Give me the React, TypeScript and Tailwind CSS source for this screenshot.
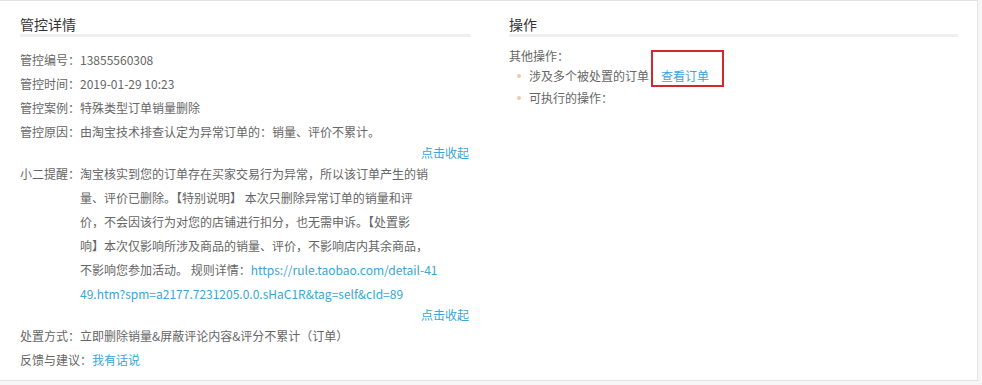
import React from 'react';

const font = { fontFamily: '"Noto Sans CJK SC", "Noto Sans", sans-serif' };

const Row = ({ label, children }: { label: string; children: React.ReactNode }) => (
  <div className="flex leading-[24px] whitespace-nowrap">
    <span>{label}</span>
    <span>{children}</span>
  </div>
);

const Collapse = () => (
  <div className="text-right leading-[18px] pr-[2px]">
    <a className="text-[#39a5d8] cursor-pointer">点击收起</a>
  </div>
);

const tipLines = [
  '淘宝核实到您的订单存在买家交易行为异常，所以该订单产生的销',
  '量、评价已删除。【特别说明】 本次只删除异常订单的销量和评',
  '价，不会因该行为对您的店铺进行扣分，也无需申诉。【处置影',
  '响】本次仅影响所涉及商品的销量、评价，不影响店内其余商品，',
];

export default function App() {
  return (
    <div className="w-[982px] h-[385px] bg-[#f6f6f7]" style={font}>
      <div className="w-[978px] h-[381px] bg-white border-t border-r border-b border-[#e3e3e6] flex gap-[38px] pl-[20px] pr-[19px] text-[12px] text-[#666]">
        {/* 管控详情 */}
        <div className="w-[452px]">
          <div className="pt-[13px] leading-[20px] text-[14px] text-[#333] border-b-[3px] border-[#efefef]">管控详情</div>
          <div className="mt-[11px]">
            <Row label="管控编号：">13855560308</Row>
            <Row label="管控时间：">2019-01-29 10:23</Row>
            <Row label="管控案例：">特殊类型订单销量删除</Row>
            <Row label="管控原因：">由淘宝技术排查认定为异常订单的：销量、评价不累计。</Row>
            <Collapse />
            <div className="flex leading-[24px] whitespace-nowrap">
              <span className="w-[60px] shrink-0">小二提醒：</span>
              <div>
                {tipLines.map((l) => (
                  <div key={l}>{l}</div>
                ))}
                <div>
                  不影响您参加活动。 规则详情：
                  <a className="text-[#39a5d8]">https://rule.taobao.com/detail-41</a>
                </div>
                <div>
                  <a className="text-[#39a5d8]">49.htm?spm=a2177.7231205.0.0.sHaC1R&amp;tag=self&amp;cId=89</a>
                </div>
              </div>
            </div>
            <Collapse />
            <Row label="处置方式：">立即删除销量&amp;屏蔽评论内容&amp;评分不累计（订单）</Row>
            <Row label="反馈与建议：">
              <a className="text-[#39a5d8]">我有话说</a>
            </Row>
          </div>
        </div>

        {/* 操作 */}
        <div className="w-[450px]">
          <div className="pt-[13px] leading-[20px] text-[14px] text-[#333] border-b-[3px] border-[#efefef]">操作</div>
          <div className="mt-[10px] leading-[18px]">其他操作：</div>
          <ul className="leading-[22px]">
            <li className="flex items-center pl-[8px]">
              <span className="w-[4px] h-[4px] rounded-full bg-[#f0c9a6] mr-[8px]" />
              <span>涉及多个被处置的订单：</span>
              <span className="relative">
                <a className="text-[#39a5d8]">查看订单</a>
                <span className="absolute left-[-10px] top-[-15px] w-[73px] h-[37px] border-2 border-[#d3262d]" />
              </span>
            </li>
            <li className="flex items-center pl-[8px]">
              <span className="w-[4px] h-[4px] rounded-full bg-[#f0c9a6] mr-[8px]" />
              <span>可执行的操作：</span>
            </li>
          </ul>
        </div>
      </div>
    </div>
  );
}
